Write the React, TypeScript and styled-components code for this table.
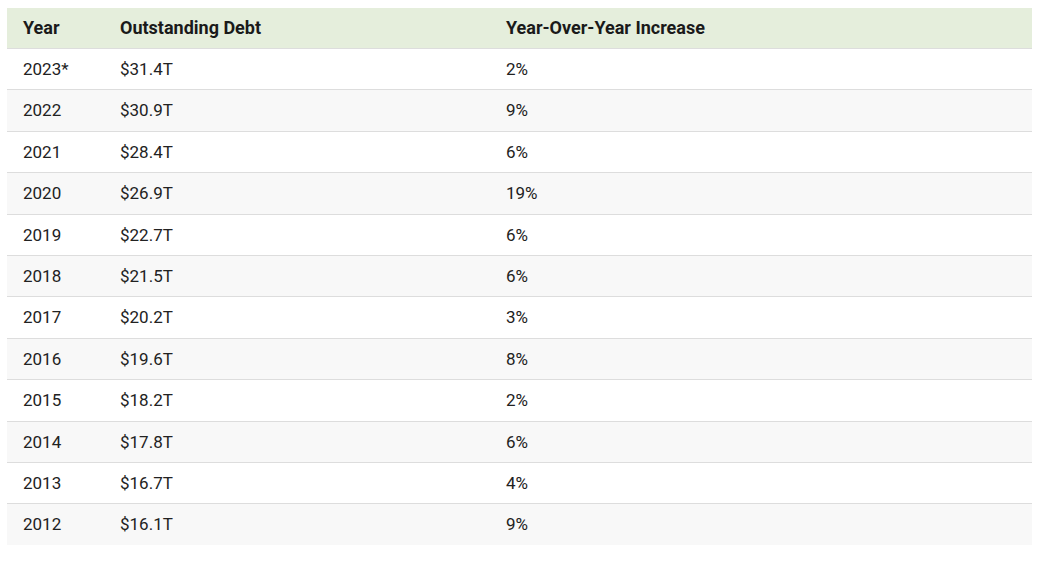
import React from 'react';
import styled, { createGlobalStyle } from 'styled-components';

const GlobalStyle = createGlobalStyle`
  body {
    margin: 0;
    background: #ffffff;
    font-family: Roboto, "Liberation Sans", sans-serif;
  }
`;

const Page = styled.div`
  padding: 8px 20px 0 7px;
`;

const Table = styled.table`
  width: 1025px;
  border-collapse: collapse;
  font-size: 17px;
  color: #222222;
  table-layout: fixed;
`;

const Col = styled.col<{ $w?: number }>`
  width: ${p => (p.$w ? `${p.$w}px` : 'auto')};
`;

const HeadCell = styled.th`
  background: #e5eedc;
  text-align: left;
  font-size: 18px;
  font-weight: 700;
  padding: 8px 16px;
  line-height: 24px;
  color: #1a1a1a;
`;

const Row = styled.tr<{ $striped: boolean }>`
  background: ${p => (p.$striped ? '#f8f8f8' : '#ffffff')};
  border-top: 1px solid #dddddd;
`;

const Cell = styled.td`
  padding: 8px 16px;
  line-height: 24.4px;
`;

const rows: [string, string, string][] = [
  ['2023*', '$31.4T', '2%'],
  ['2022', '$30.9T', '9%'],
  ['2021', '$28.4T', '6%'],
  ['2020', '$26.9T', '19%'],
  ['2019', '$22.7T', '6%'],
  ['2018', '$21.5T', '6%'],
  ['2017', '$20.2T', '3%'],
  ['2016', '$19.6T', '8%'],
  ['2015', '$18.2T', '2%'],
  ['2014', '$17.8T', '6%'],
  ['2013', '$16.7T', '4%'],
  ['2012', '$16.1T', '9%'],
];

export default function App() {
  return (
    <Page>
      <GlobalStyle />
      <Table>
        <colgroup>
          <Col $w={97} />
          <Col $w={386} />
          <Col />
        </colgroup>
        <thead>
          <tr>
            <HeadCell>Year</HeadCell>
            <HeadCell>Outstanding Debt</HeadCell>
            <HeadCell>Year-Over-Year Increase</HeadCell>
          </tr>
        </thead>
        <tbody>
          {rows.map(([year, debt, inc], i) => (
            <Row key={year} $striped={i % 2 === 1}>
              <Cell>{year}</Cell>
              <Cell>{debt}</Cell>
              <Cell>{inc}</Cell>
            </Row>
          ))}
        </tbody>
      </Table>
    </Page>
  );
}
